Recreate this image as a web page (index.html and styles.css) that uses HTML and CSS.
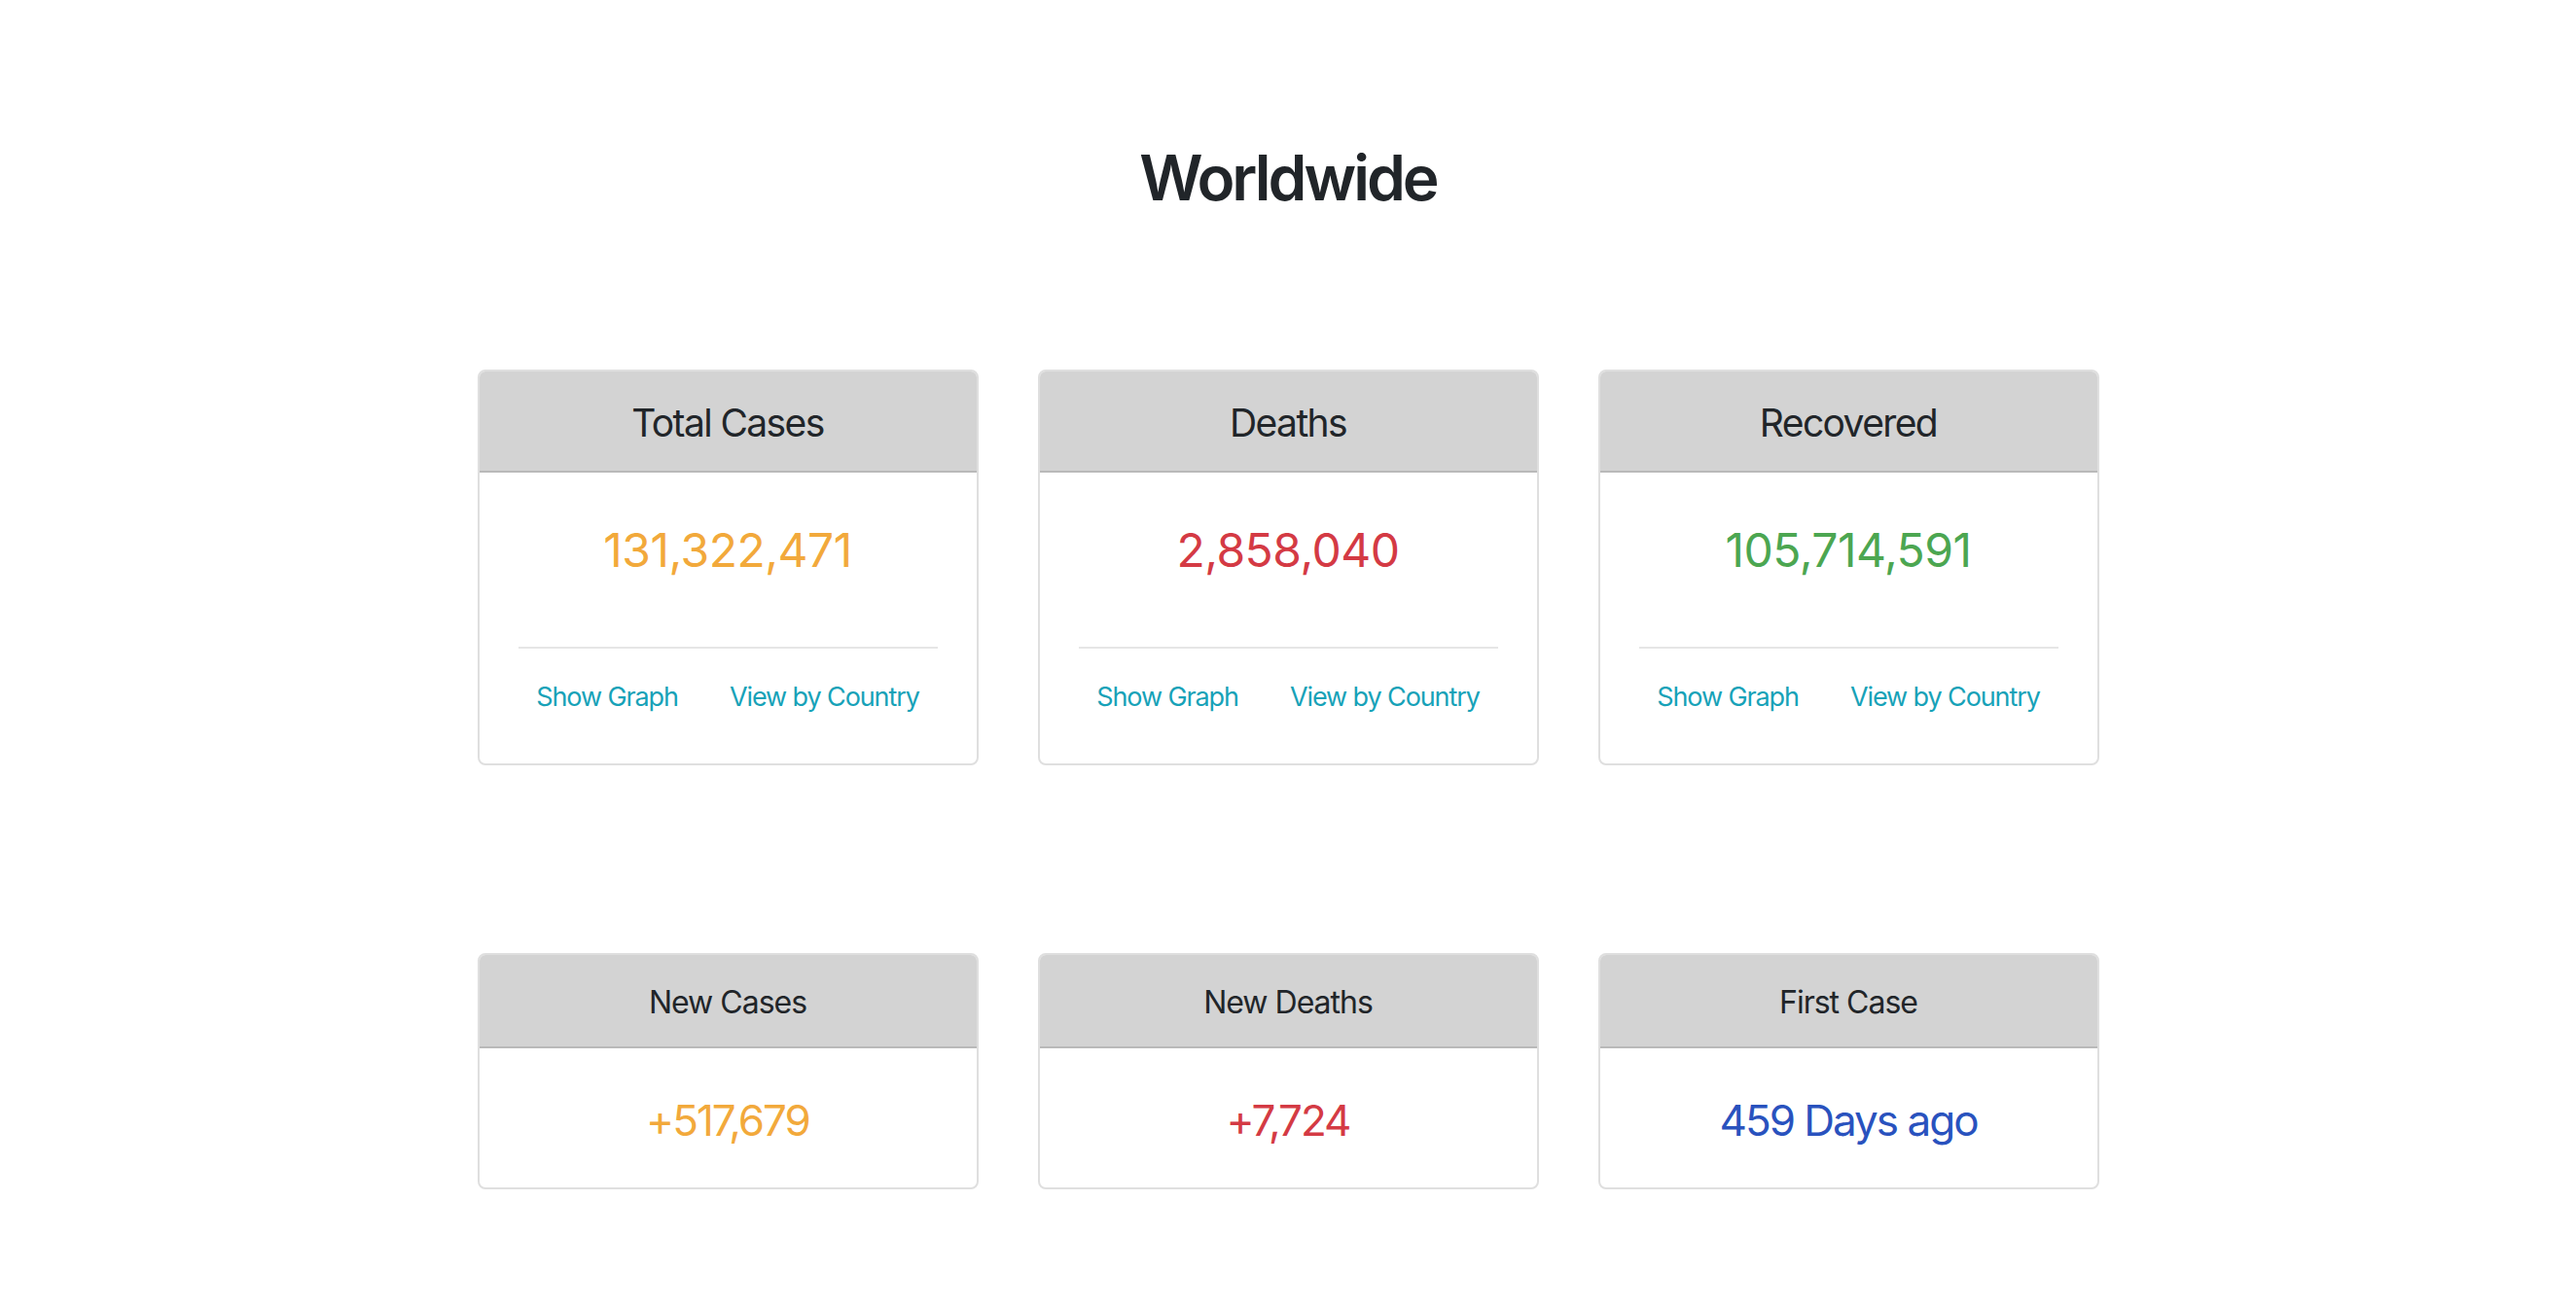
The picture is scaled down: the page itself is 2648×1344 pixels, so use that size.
FILE: index.html
```html
<!DOCTYPE html>
<html lang="en">
<head>
<meta charset="utf-8">
<title>Worldwide</title>
<link rel="stylesheet" href="styles.css">
</head>
<body>
<main class="page">
  <h1 class="title">Worldwide</h1>

  <section class="grid grid-main">
    <div class="card">
      <div class="card-header">Total Cases</div>
      <div class="card-body">
        <div class="value orange">131,322,471</div>
        <hr class="divider">
        <div class="links"><a href="#">Show Graph</a><a href="#">View by Country</a></div>
      </div>
    </div>
    <div class="card">
      <div class="card-header">Deaths</div>
      <div class="card-body">
        <div class="value red">2,858,040</div>
        <hr class="divider">
        <div class="links"><a href="#">Show Graph</a><a href="#">View by Country</a></div>
      </div>
    </div>
    <div class="card">
      <div class="card-header">Recovered</div>
      <div class="card-body">
        <div class="value green">105,714,591</div>
        <hr class="divider">
        <div class="links"><a href="#">Show Graph</a><a href="#">View by Country</a></div>
      </div>
    </div>
  </section>

  <section class="grid grid-small">
    <div class="card card-sm">
      <div class="card-header">New Cases</div>
      <div class="card-body">
        <div class="value orange">+517,679</div>
      </div>
    </div>
    <div class="card card-sm">
      <div class="card-header">New Deaths</div>
      <div class="card-body">
        <div class="value red">+7,724</div>
      </div>
    </div>
    <div class="card card-sm">
      <div class="card-header">First Case</div>
      <div class="card-body">
        <div class="value blue">459 Days ago</div>
      </div>
    </div>
  </section>
</main>
</body>
</html>
```

FILE: styles.css
```css
* { box-sizing: border-box; }

html, body {
  margin: 0;
  padding: 0;
  background: #ffffff;
}

body {
  font-family: Inter, "Noto Sans", "Liberation Sans", sans-serif;
  color: #212529;
}

.page {
  padding-top: 144px;
}

.title {
  margin: 0;
  text-align: center;
  font-size: 64px;
  line-height: 77px;
  font-weight: 600;
  letter-spacing: -3px;
  color: #212529;
}

.grid {
  display: grid;
  grid-template-columns: repeat(3, 515px);
  column-gap: 61px;
  justify-content: center;
}

.grid-main {
  margin-top: 159px;
}

.grid-small {
  margin-top: 193px;
}

.card {
  border: 2px solid #dfdfdf;
  border-radius: 8px;
  overflow: hidden;
  background: #fff;
}

.card-header {
  background: #d3d3d3;
  border-bottom: 2px solid #b9b9b9;
  text-align: center;
  font-size: 39px;
  line-height: 48px;
  letter-spacing: -1.6px;
  padding: 29px 0 25px;
  color: #212529;
}

.card-sm .card-header {
  font-size: 32px;
  line-height: 40px;
  letter-spacing: -1px;
  padding: 29px 0 25px;
}

.card-body {
  text-align: center;
  padding: 51px 40px 51px;
}

.card-sm .card-body {
  padding: 47px 40px 42px;
}

.value {
  font-size: 48px;
  line-height: 58px;
  letter-spacing: -0.5px;
}

.card-sm .value {
  font-size: 44px;
  line-height: 54px;
  letter-spacing: -2px;
}

.orange { color: #f2a93b; }
.red { color: #d43a44; }
.green { color: #4ca651; }
.blue { color: #2952be; }

.divider {
  margin: 70px 0 33px;
  border: 0;
  border-top: 2px solid #e6e6e6;
  height: 0;
}

.links {
  display: flex;
  justify-content: center;
  gap: 53px;
  font-size: 27px;
  line-height: 34px;
  letter-spacing: -1.1px;
  white-space: nowrap;
}

.links a {
  color: #17a2b8;
  text-decoration: none;
}
```
